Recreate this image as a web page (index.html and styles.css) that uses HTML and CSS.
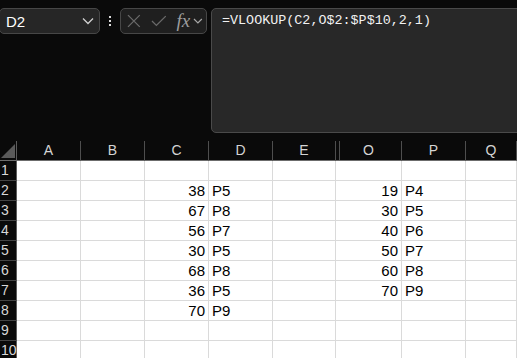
FILE: index.html
```html
<!DOCTYPE html>
<html lang="en">
<head>
  <meta charset="UTF-8"/>
  <title>Sheet</title>
  <link rel="stylesheet" href="styles.css">
</head>
<body>

  <!-- Formula bar area -->
  <div class="topbar">
    <div class="namebox">
      <span>D2</span>
      <svg class="chev" width="12" height="8" viewBox="0 0 12 8"><path d="M1 1.5 L6 6.5 L11 1.5" fill="none" stroke="#cfcfcf" stroke-width="1.3"/></svg>
    </div>
    <div class="dots"><i></i><i></i><i></i></div>
    <div class="fnbox">
      <svg width="14" height="14" viewBox="0 0 14 14"><path d="M1 1 L13 13 M13 1 L1 13" stroke="#6a6a6a" stroke-width="1.3" fill="none"/></svg>
      <svg width="16" height="12" viewBox="0 0 16 12"><path d="M1 6 L5.5 10.5 L15 1" stroke="#6a6a6a" stroke-width="1.3" fill="none"/></svg>
      <span class="fx">fx</span>
      <svg width="10" height="6" viewBox="0 0 10 6"><path d="M1 1 L5 5 L9 1" fill="none" stroke="#a8a8a8" stroke-width="1.2"/></svg>
    </div>
    <div class="formula">=VLOOKUP(C2,O$2:$P$10,2,1)</div>
  </div>

  <!-- Grid -->
  <div class="sheet">
    <div class="row head">
      <div class="rh corner"><svg width="14" height="14" viewBox="0 0 14 14"><path d="M14 0 L14 14 L0 14 Z" fill="#5a5a5a"/></svg></div>
      <div class="ch">A</div><div class="ch">B</div><div class="ch">C</div><div class="ch">D</div>
      <div class="ch">E</div><div class="ch split">O</div><div class="ch">P</div><div class="ch">Q</div>
    </div>
    <div class="row"><div class="rh">1</div><div></div><div></div><div></div><div></div><div></div><div></div><div></div><div></div></div>
    <div class="row"><div class="rh">2</div><div></div><div></div><div class="n">38</div><div>P5</div><div></div><div class="n">19</div><div>P4</div><div></div></div>
    <div class="row"><div class="rh">3</div><div></div><div></div><div class="n">67</div><div>P8</div><div></div><div class="n">30</div><div>P5</div><div></div></div>
    <div class="row"><div class="rh">4</div><div></div><div></div><div class="n">56</div><div>P7</div><div></div><div class="n">40</div><div>P6</div><div></div></div>
    <div class="row"><div class="rh">5</div><div></div><div></div><div class="n">30</div><div>P5</div><div></div><div class="n">50</div><div>P7</div><div></div></div>
    <div class="row"><div class="rh">6</div><div></div><div></div><div class="n">68</div><div>P8</div><div></div><div class="n">60</div><div>P8</div><div></div></div>
    <div class="row"><div class="rh">7</div><div></div><div></div><div class="n">36</div><div>P5</div><div></div><div class="n">70</div><div>P9</div><div></div></div>
    <div class="row"><div class="rh">8</div><div></div><div></div><div class="n">70</div><div>P9</div><div></div><div></div><div></div><div></div></div>
    <div class="row"><div class="rh">9</div><div></div><div></div><div></div><div></div><div></div><div></div><div></div><div></div></div>
    <div class="row"><div class="rh">10</div><div></div><div></div><div></div><div></div><div></div><div></div><div></div><div></div></div>
  </div>

</body>
</html>
```

FILE: styles.css
```css
body{margin:0;background:#0a0a0a;font-family:'Liberation Sans',Arial,sans-serif;overflow:hidden;width:517px;height:358px}
.topbar{display:flex;align-items:flex-start;padding-top:8px;height:125px}
.namebox{box-sizing:border-box;width:101px;height:26px;margin-left:-1px;background:#262626;border:1px solid #474747;
         border-radius:5px;display:flex;align-items:center;justify-content:space-between;padding:0 5px 0 6px;color:#fff;font-size:15px}
.dots{width:20px;height:26px;display:flex;flex-direction:column;align-items:center;justify-content:center;gap:2px}
.dots i{display:block;width:2px;height:2px;background:#dcdcdc}
.fnbox{box-sizing:border-box;width:87px;height:26px;background:#1f1f1f;border:1px solid #474747;border-radius:5px;
       display:flex;align-items:center;gap:8px;padding:0 3px 0 6px}
.fnbox svg:nth-child(2){margin-left:2px}
.fx{font-family:'Liberation Serif','DejaVu Serif',serif;font-style:italic;font-size:19px;color:#9d9d9d;margin-left:2px;margin-right:-5px}
.formula{box-sizing:border-box;flex:1;margin-left:4px;margin-right:-10px;height:125px;background:#282828;border:1px solid #4a4a4a;
         border-radius:5px;padding:4px 10px;color:#f2f2f2;font-family:'Liberation Mono','DejaVu Sans Mono',monospace;font-size:13.4px}
.sheet{margin-top:8px}
.row{display:grid;grid-template-columns:17px 64px 64px 64px 64px 63px 66px 64px 1fr;height:20px}
.row>div{box-sizing:border-box;border-right:1px solid #dadada;border-bottom:1px solid #dadada;background:#fff;
         font-size:15px;line-height:19px;color:#000;padding:0 3px;white-space:nowrap}
.row>.n{text-align:right}
.row>.rh{background:#0a0a0a;color:#d8d8d8;border-right:1px solid #5c5c5c;border-bottom:1px solid #444;padding:0 0 0 1px;
         font-size:14px;overflow:visible}
.head>div{background:#0a0a0a;border-right:1px solid #4e4e4e;border-bottom:1px solid #6c6c6c;color:#d4d4d4;
          text-align:center;font-size:14px;line-height:19px}
.head>.corner{display:flex;align-items:flex-end;justify-content:flex-end;padding:0 1px 2px 0;border-bottom-color:#6c6c6c}
.head>.split{background:linear-gradient(to right,transparent 3px,#4e4e4e 3px,#4e4e4e 4px,transparent 4px) #0a0a0a}
```
